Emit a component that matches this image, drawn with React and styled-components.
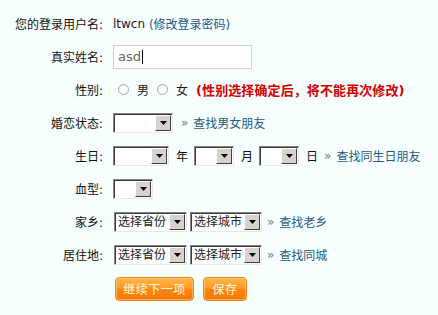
import React from "react";
import styled, { createGlobalStyle } from "styled-components";

const Global = createGlobalStyle`
  html, body { margin: 0; padding: 0; background: #f6fefe; }
  body { font-family: "DejaVu Sans", "Noto Sans CJK SC", sans-serif; font-size: 12px; color: #222; }
`;

const Form = styled.div`
  display: grid;
  grid-template-columns: 104px 1fr;
  column-gap: 9px;
  grid-auto-rows: 33px;
  align-items: center;
  padding-top: 7px;
  width: 438px;
  height: 315px;
  box-sizing: border-box;
`;

const Label = styled.div`
  text-align: right;
  font-size: 12px;
  color: #111;
  white-space: nowrap;
  padding-right: 1px;
`;

const Field = styled.div`
  display: flex;
  align-items: center;
  white-space: nowrap;
  font-size: 12px;
`;

const Plain = styled.span`
  color: #1a1a1a;
  font-size: 12px;
`;

const Link = styled.a`
  color: #245a7e;
  text-decoration: none;
  font-size: 12px;
  cursor: pointer;
`;

const Raquo = styled.span`
  color: #5d82a0;
  font-size: 12px;
  margin: 0 5px 0 ${p => p.$ml ?? 7}px;
`;

const TextInput = styled.div`
  width: 139px;
  height: 24px;
  box-sizing: border-box;
  border: 1px solid #cbd2d2;
  background: #fff;
  display: flex;
  align-items: center;
  padding-left: 4px;
  color: #666;
  font-size: 13px;
`;

const Caret = styled.span`
  display: inline-block;
  width: 1px;
  height: 14px;
  background: #111;
  margin-left: 1px;
`;

const RadioDot = styled.span`
  display: inline-block;
  width: 11px;
  height: 11px;
  box-sizing: border-box;
  border-radius: 50%;
  border: 1px solid #a8a8a8;
  background: radial-gradient(circle at 60% 60%, #ffffff 45%, #e2e2e2 100%);
  margin: 0 ${p => p.$mr}px 0 ${p => p.$ml}px;
`;

const Warn = styled.span`
  color: #d20000;
  font-weight: bold;
  font-size: 13px;
  letter-spacing: 0.1px;
  margin-left: 8px;
`;

const SelectBox = styled.div`
  display: flex;
  width: ${p => p.$w}px;
  height: 20px;
  box-sizing: border-box;
  border-top: 1px solid #848484;
  border-left: 1px solid #848484;
  border-right: 1px solid #e8e8e8;
  border-bottom: 1px solid #e8e8e8;
  box-shadow: inset 1px 1px 0 #3c3c3c;
  padding: 1px;
  background: #fff;
  margin-left: ${p => p.$ml ?? 0}px;
`;

const SelectText = styled.span`
  flex: 1;
  font-size: 12px;
  line-height: 16px;
  padding-left: 2px;
  color: #222;
  overflow: hidden;
`;

const ArrowBtn = styled.span`
  width: 16px;
  height: 16px;
  box-sizing: border-box;
  background: #d6d3cc;
  border: 1px solid;
  border-color: #ffffff #404040 #404040 #ffffff;
  display: flex;
  align-items: center;
  justify-content: center;
`;

const Unit = styled.span`
  font-size: 12px;
  color: #111;
  margin: 0 6px 0 7px;
`;

const ButtonRow = styled.div`
  grid-column: 2;
  display: flex;
  gap: 9px;
  margin-left: 2px;
  margin-top: 2px;
`;

const OrangeButton = styled.button`
  width: ${p => p.$w}px;
  height: 24px;
  padding: 0;
  border: 1px solid #ef8420;
  border-radius: 4px;
  background: linear-gradient(#ffb648 0%, #ff9a28 45%, #ff840a 55%, #f57800 100%);
  box-shadow: inset 0 0 0 1px rgba(255, 214, 140, 0.55);
  color: #fff8e0;
  font-family: "Noto Sans CJK SC", sans-serif;
  font-size: 12px;
  letter-spacing: 0.5px;
  cursor: pointer;
`;

const Arrow = () => (
  <svg width="7" height="4" viewBox="0 0 7 4">
    <polygon points="0,0 7,0 3.5,4" fill="#000" />
  </svg>
);

const Select = ({ w, text, ml }) => (
  <SelectBox $w={w} $ml={ml}>
    <SelectText>{text}</SelectText>
    <ArrowBtn><Arrow /></ArrowBtn>
  </SelectBox>
);

export default function App() {
  return (
    <>
      <Global />
      <Form>
        <Label>您的登录用户名:</Label>
        <Field>
          <Plain>ltwcn&nbsp;</Plain>
          <Link>(修改登录密码)</Link>
        </Field>

        <Label>真实姓名:</Label>
        <Field>
          <TextInput>asd<Caret /></TextInput>
        </Field>

        <Label>性别:</Label>
        <Field>
          <RadioDot $ml={5} $mr={8} />
          <Plain>男</Plain>
          <RadioDot $ml={8} $mr={8} />
          <Plain>女</Plain>
          <Warn>(性别选择确定后，将不能再次修改)</Warn>
        </Field>

        <Label>婚恋状态:</Label>
        <Field>
          <Select w={60} />
          <Raquo $ml={8}>»</Raquo>
          <Link>查找男女朋友</Link>
        </Field>

        <Label>生日:</Label>
        <Field>
          <Select w={56} />
          <Unit>年</Unit>
          <Select w={40} />
          <Unit>月</Unit>
          <Select w={40} />
          <Unit>日</Unit>
          <Raquo $ml={0}>»</Raquo>
          <Link>查找同生日朋友</Link>
        </Field>

        <Label>血型:</Label>
        <Field>
          <Select w={40} />
        </Field>

        <Label>家乡:</Label>
        <Field>
          <Select w={73} text="选择省份" ml={1} />
          <Select w={72} text="选择城市" ml={3} />
          <Raquo $ml={5}>»</Raquo>
          <Link>查找老乡</Link>
        </Field>

        <Label>居住地:</Label>
        <Field>
          <Select w={73} text="选择省份" ml={1} />
          <Select w={72} text="选择城市" ml={3} />
          <Raquo $ml={5}>»</Raquo>
          <Link>查找同城</Link>
        </Field>

        <ButtonRow>
          <OrangeButton $w={79}>继续下一项</OrangeButton>
          <OrangeButton $w={44}>保存</OrangeButton>
        </ButtonRow>
      </Form>
    </>
  );
}
